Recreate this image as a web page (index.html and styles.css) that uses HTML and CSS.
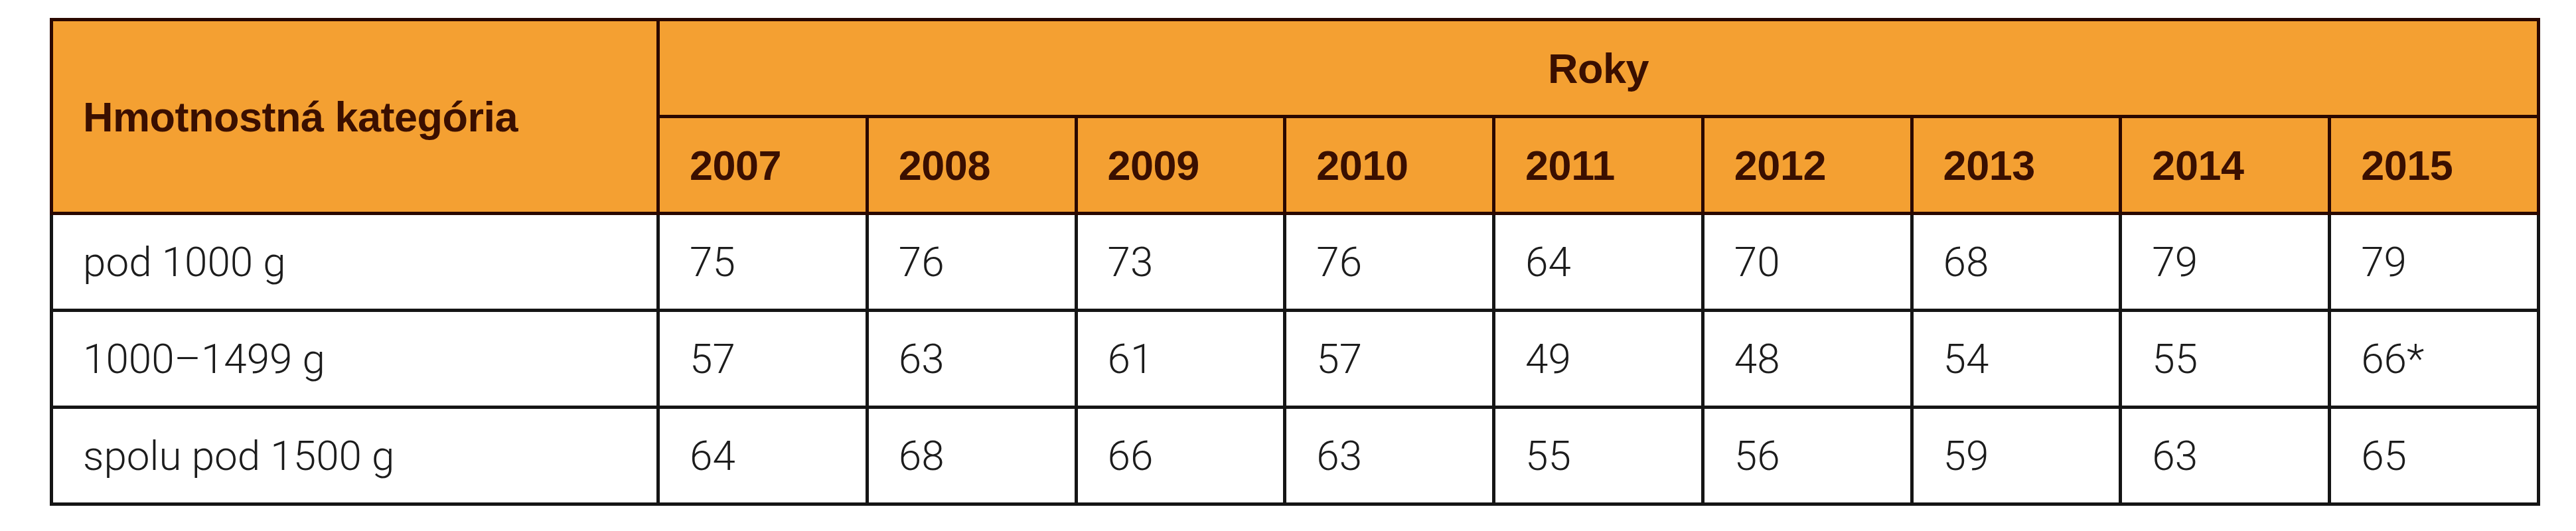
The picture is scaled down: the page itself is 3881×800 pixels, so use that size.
FILE: index.html
```html
<!DOCTYPE html>
<html lang="sk">
<head>
<meta charset="utf-8">
<title>Hmotnostná kategória – Roky</title>
<link rel="stylesheet" href="styles.css">
</head>
<body>
<table class="data">
  <colgroup>
    <col class="col-cat">
    <col span="9">
  </colgroup>
  <thead>
    <tr>
      <th class="h-cat" rowspan="2">Hmotnostná kategória</th>
      <th class="h-years" colspan="9">Roky</th>
    </tr>
    <tr>
      <th>2007</th><th>2008</th><th>2009</th><th>2010</th><th>2011</th><th>2012</th><th>2013</th><th>2014</th><th>2015</th>
    </tr>
  </thead>
  <tbody>
    <tr>
      <td>pod 1000 g</td><td>75</td><td>76</td><td>73</td><td>76</td><td>64</td><td>70</td><td>68</td><td>79</td><td>79</td>
    </tr>
    <tr>
      <td>1000–1499 g</td><td>57</td><td>63</td><td>61</td><td>57</td><td>49</td><td>48</td><td>54</td><td>55</td><td>66*</td>
    </tr>
    <tr>
      <td>spolu pod 1500 g</td><td>64</td><td>68</td><td>66</td><td>63</td><td>55</td><td>56</td><td>59</td><td>63</td><td>65</td>
    </tr>
  </tbody>
</table>
</body>
</html>
```
FILE: styles.css
```css
html, body {
  margin: 0;
  padding: 0;
  background: #ffffff;
}

.data {
  margin: 27px 0 0 75px;
  width: 3752px;
  table-layout: fixed;
  border-collapse: collapse;
  border: 5px solid #1a1a1a;
}

.col-cat {
  width: 914px;
}

.data tr {
  height: 146px;
}

.data th,
.data td {
  padding: 0 0 0 45px;
  text-align: left;
  vertical-align: middle;
  white-space: nowrap;
}

.data th {
  background: #f4a032;
  color: #3a0f00;
  font-family: "Liberation Sans", Arial, sans-serif;
  font-weight: 700;
  font-size: 63px;
  letter-spacing: -0.5px;
  border: 5px solid #2a0800;
}

.data th.h-years {
  text-align: center;
  padding: 0;
}

.data td {
  background: #ffffff;
  color: #1c1c1c;
  font-family: Roboto, "Liberation Sans", Arial, sans-serif;
  font-weight: 300;
  font-size: 62px;
  border: 5px solid #151515;
}
```
